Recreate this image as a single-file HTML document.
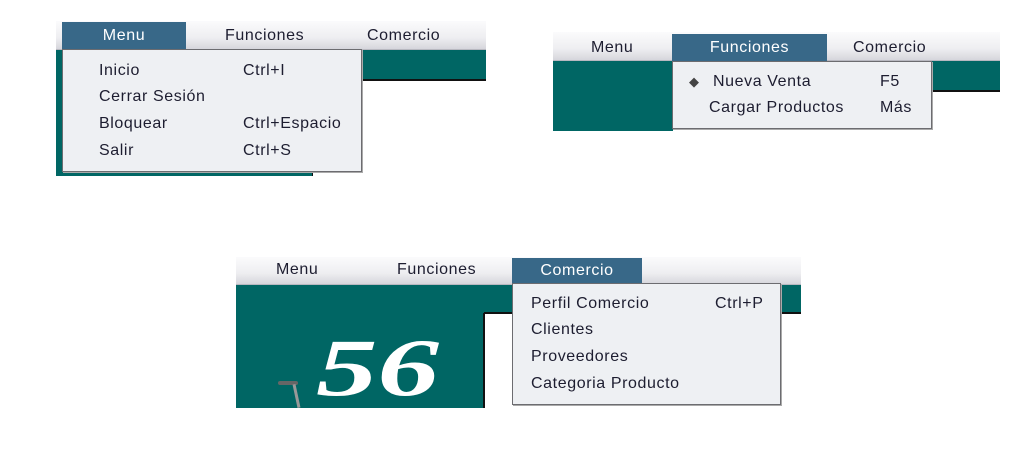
<!DOCTYPE html>
<html><head><meta charset="utf-8"><style>
body{margin:0;width:1026px;height:453px;background:#fff;position:relative;overflow:hidden;font-family:"Liberation Sans",Arial,sans-serif;font-size:16px;letter-spacing:0.6px;color:#1d1d30}
div{position:absolute;box-sizing:border-box}
.bar{background:linear-gradient(#fbfbfc,#eeeef1 60%,#d6d6dc);border-bottom:1px solid #b8b8c0}
.teal{background:#006664}
.sel{background:#386888;color:#fff;text-align:center}
.lab{white-space:nowrap}
.pop{background:#eef0f3;border:1px solid #6c6c70;box-shadow:1px 1px 0 #aaa}
</style></head><body>
<!-- panel 1 -->
<div class="teal" style="left:56px;top:49px;width:430px;height:31px"></div>
<div style="left:362px;top:79px;width:124px;height:2px;background:#111"></div>
<div class="teal" style="left:56px;top:80px;width:256px;height:96px"></div>
<div style="left:312px;top:80px;width:1px;height:96px;background:#111"></div>
<div class="bar" style="left:56px;top:21px;width:430px;height:29px"></div>
<div class="sel" style="left:62px;top:22px;width:124px;height:28px;line-height:28px">Menu</div>
<div class="lab" style="left:225px;top:27px">Funciones</div>
<div class="lab" style="left:367px;top:27px">Comercio</div>
<div class="pop" style="left:62px;top:49px;width:300px;height:123px"></div>
<div class="lab" style="left:99px;top:62px">Inicio</div><div class="lab" style="left:243px;top:62px">Ctrl+I</div>
<div class="lab" style="left:99px;top:88px">Cerrar Sesión</div>
<div class="lab" style="left:99px;top:115px">Bloquear</div><div class="lab" style="left:243px;top:115px">Ctrl+Espacio</div>
<div class="lab" style="left:99px;top:142px">Salir</div><div class="lab" style="left:243px;top:142px">Ctrl+S</div>
<!-- panel 2 -->
<div class="teal" style="left:553px;top:60px;width:447px;height:31px"></div>
<div style="left:932px;top:90px;width:68px;height:2px;background:#111"></div>
<div class="teal" style="left:553px;top:91px;width:120px;height:40px"></div>
<div class="bar" style="left:553px;top:32px;width:447px;height:29px"></div>
<div class="sel" style="left:672px;top:34px;width:155px;height:27px;line-height:27px">Funciones</div>
<div class="lab" style="left:591px;top:39px">Menu</div>
<div class="lab" style="left:853px;top:39px">Comercio</div>
<div class="pop" style="left:672px;top:61px;width:260px;height:68px"></div>
<div class="lab" style="left:689px;top:74px;font-size:13px;color:#444">◆</div>
<div class="lab" style="left:713px;top:73px">Nueva Venta</div><div class="lab" style="left:880px;top:73px">F5</div>
<div class="lab" style="left:709px;top:99px">Cargar Productos</div><div class="lab" style="left:880px;top:99px">Más</div>
<!-- panel 3 -->
<div class="teal" style="left:236px;top:284px;width:565px;height:29px"></div>
<div style="left:484px;top:312px;width:317px;height:2px;background:#111"></div>
<div class="teal" style="left:236px;top:313px;width:248px;height:95px"></div>
<div style="left:483px;top:313px;width:2px;height:95px;background:#111"></div>
<div style="left:278px;top:381px;width:20px;height:4px;background:#666;border-radius:2px"></div>
<div style="left:295px;top:384px;width:3px;height:24px;background:#999;transform:rotate(-12deg)"></div>
<div class="lab" style="left:316px;top:326px;font-family:'Liberation Serif',serif;font-weight:bold;font-style:italic;font-size:82px;color:#fff;letter-spacing:0;line-height:84px;transform:scaleX(1.5);transform-origin:0 0">56</div>
<div class="bar" style="left:236px;top:257px;width:565px;height:28px"></div>
<div class="sel" style="left:512px;top:258px;width:130px;height:26px;line-height:26px">Comercio</div>
<div class="lab" style="left:276px;top:261px">Menu</div>
<div class="lab" style="left:397px;top:261px">Funciones</div>
<div class="pop" style="left:512px;top:283px;width:269px;height:122px"></div>
<div class="lab" style="left:531px;top:295px">Perfil Comercio</div><div class="lab" style="left:715px;top:295px">Ctrl+P</div>
<div class="lab" style="left:531px;top:321px">Clientes</div>
<div class="lab" style="left:531px;top:348px">Proveedores</div>
<div class="lab" style="left:531px;top:375px">Categoria Producto</div>
</body></html>
